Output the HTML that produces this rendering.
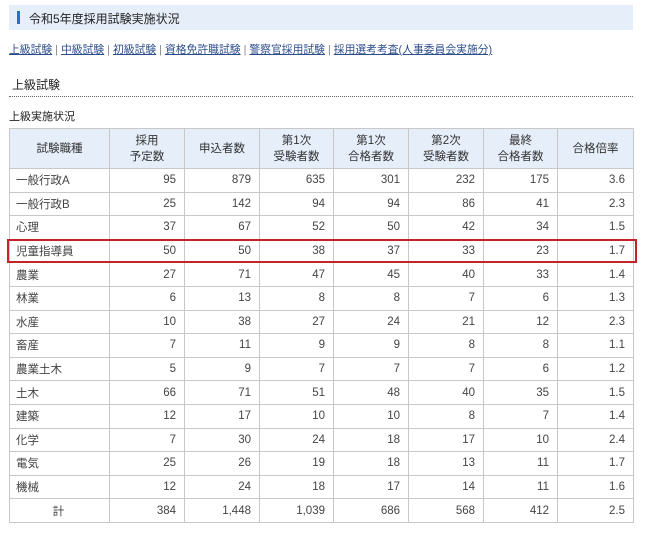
<!DOCTYPE html>
<html><head><meta charset="utf-8"><style>
body{margin:0;background:#fff;width:645px;height:533px;overflow:hidden;font-family:"Liberation Sans","Noto Sans CJK JP",sans-serif;color:#333;position:relative}
.bar{position:absolute;left:9px;top:5px;width:624px;height:25px;background:#e6eefa}
.bar i{position:absolute;left:8px;top:6px;width:3px;height:13px;background:#2a6fd0}
.bar span{position:absolute;left:20px;top:5px;font-size:12px;color:#222}
.links{position:absolute;left:9px;top:41px;font-size:10.8px;color:#888;white-space:nowrap}
.links a{color:#2c4d8a;text-decoration:underline}
.h2{position:absolute;left:12px;top:76px;font-size:12px;color:#222}
.dot{position:absolute;left:9px;top:96px;width:624px;border-top:1px dotted #666}
.h3{position:absolute;left:9px;top:108px;font-size:11px;color:#222}
table{position:absolute;left:9px;top:128px;width:624px;border-collapse:collapse;font-size:11.5px;table-layout:fixed;color:#444}
td,th{border:1px solid #c8c8c8;padding:0 8px;height:22.6px;text-align:right;font-weight:normal}
th{background:#e6eefa;text-align:center;height:39px;line-height:16px;color:#333}
td:first-child{text-align:left;padding-left:6px}
.red{position:absolute;left:7px;top:239px;width:626px;height:20px;border:2px solid #c4232b}
</style></head><body>
<div class="bar"><i></i><span>令和5年度採用試験実施状況</span></div>
<div class="links"><a>上級試験</a> | <a>中級試験</a> | <a>初級試験</a> | <a>資格免許職試験</a> | <a>警察官採用試験</a> | <a>採用選考考査(人事委員会実施分)</a></div>
<div class="h2">上級試験</div>
<div class="dot"></div>
<div class="h3">上級実施状況</div>
<table>
<colgroup><col style="width:100px"><col style="width:75px"><col style="width:75px"><col style="width:74px"><col style="width:75px"><col style="width:75px"><col style="width:74px"><col style="width:76px"></colgroup>
<tr><th>試験職種</th><th>採用<br>予定数</th><th>申込者数</th><th>第1次<br>受験者数</th><th>第1次<br>合格者数</th><th>第2次<br>受験者数</th><th>最終<br>合格者数</th><th>合格倍率</th></tr>
<tr><td>一般行政A</td><td>95</td><td>879</td><td>635</td><td>301</td><td>232</td><td>175</td><td>3.6</td></tr>
<tr><td>一般行政B</td><td>25</td><td>142</td><td>94</td><td>94</td><td>86</td><td>41</td><td>2.3</td></tr>
<tr><td>心理</td><td>37</td><td>67</td><td>52</td><td>50</td><td>42</td><td>34</td><td>1.5</td></tr>
<tr><td>児童指導員</td><td>50</td><td>50</td><td>38</td><td>37</td><td>33</td><td>23</td><td>1.7</td></tr>
<tr><td>農業</td><td>27</td><td>71</td><td>47</td><td>45</td><td>40</td><td>33</td><td>1.4</td></tr>
<tr><td>林業</td><td>6</td><td>13</td><td>8</td><td>8</td><td>7</td><td>6</td><td>1.3</td></tr>
<tr><td>水産</td><td>10</td><td>38</td><td>27</td><td>24</td><td>21</td><td>12</td><td>2.3</td></tr>
<tr><td>畜産</td><td>7</td><td>11</td><td>9</td><td>9</td><td>8</td><td>8</td><td>1.1</td></tr>
<tr><td>農業土木</td><td>5</td><td>9</td><td>7</td><td>7</td><td>7</td><td>6</td><td>1.2</td></tr>
<tr><td>土木</td><td>66</td><td>71</td><td>51</td><td>48</td><td>40</td><td>35</td><td>1.5</td></tr>
<tr><td>建築</td><td>12</td><td>17</td><td>10</td><td>10</td><td>8</td><td>7</td><td>1.4</td></tr>
<tr><td>化学</td><td>7</td><td>30</td><td>24</td><td>18</td><td>17</td><td>10</td><td>2.4</td></tr>
<tr><td>電気</td><td>25</td><td>26</td><td>19</td><td>18</td><td>13</td><td>11</td><td>1.7</td></tr>
<tr><td>機械</td><td>12</td><td>24</td><td>18</td><td>17</td><td>14</td><td>11</td><td>1.6</td></tr>
<tr><td style="text-align:center">計</td><td>384</td><td>1,448</td><td>1,039</td><td>686</td><td>568</td><td>412</td><td>2.5</td></tr>
</table>
<div class="red"></div>
</body></html>
